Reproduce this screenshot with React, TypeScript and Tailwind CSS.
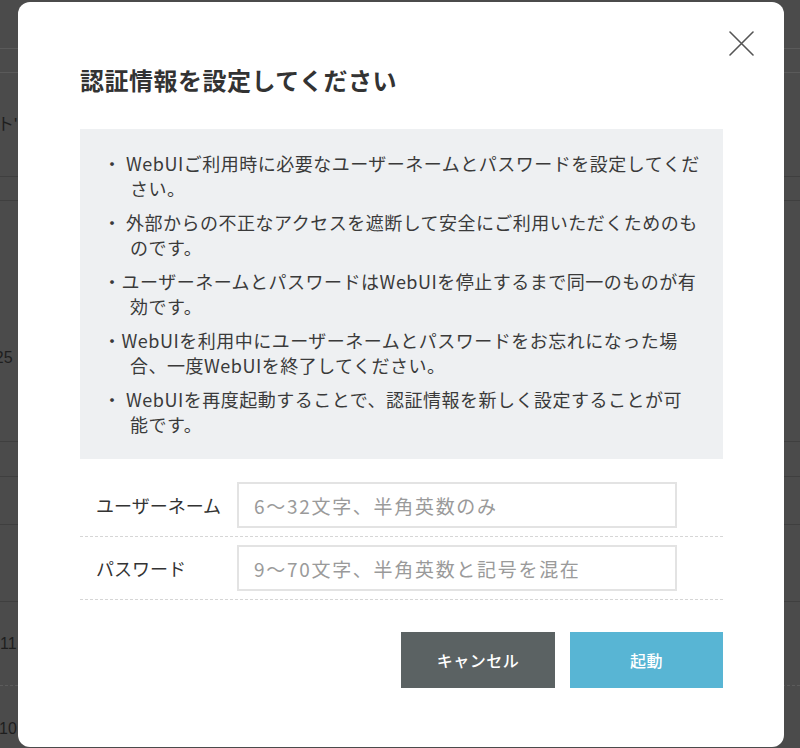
const bgRows = [
  { h: 'h-[49px]', line: 'border-[#5a5a5a]', text: '', cls: '' },
  { h: 'h-[24px]', line: 'border-[#5a5a5a]', text: '', cls: '' },
  { h: 'h-[104px] items-center', line: 'border-[#3f3f3f]', text: "ト'", cls: 'ml-[-3px] text-[17px]' },
  { h: 'h-[24px]', line: 'border-[#3f3f3f]', text: '', cls: '' },
  { h: 'h-[241px] items-start pt-[145px]', line: 'border-[#3f3f3f]', text: '2025', cls: 'ml-[-23px] text-[16px]' },
  { h: 'h-[35px]', line: 'border-[#3f3f3f]', text: '', cls: '' },
  { h: 'h-[48px]', line: 'border-[#3f3f3f]', text: '', cls: '' },
  { h: 'h-[77px]', line: 'border-[#3f3f3f]', text: '', cls: '' },
  { h: 'h-[84px] items-center border-dashed', line: 'border-[#5c5c5c]', text: '11', cls: 'ml-0 text-[16px]' },
  { h: 'h-[86px] items-center border-transparent', line: '', text: '10', cls: 'ml-[-1px] text-[16px]' },
]

// the last note breaks before 能 in the original, so the break is kept explicit
const notes = [
  '・ WebUIご利用時に必要なユーザーネームとパスワードを設定してください。',
  '・ 外部からの不正なアクセスを遮断して安全にご利用いただくためのものです。',
  '・ユーザーネームとパスワードはWebUIを停止するまで同一のものが有効です。',
  '・WebUIを利用中にユーザーネームとパスワードをお忘れになった場合、一度WebUIを終了してください。',
  '・ WebUIを再度起動することで、認証情報を新しく設定することが可\n能です。',
]

const fields = [
  { label: 'ユーザーネーム', placeholder: '6〜32文字、半角英数のみ', type: 'text' },
  { label: 'パスワード', placeholder: '9〜70文字、半角英数と記号を混在', type: 'password' },
]

export default function App() {
  return (
    <div className="relative h-[748px] w-full overflow-hidden bg-[#4b4b4b] font-['Noto_Sans_CJK_JP','Noto_Sans',sans-serif]">
      {/* dimmed page behind the dialog */}
      <div className="flex flex-col">
        {bgRows.map((r, i) => (
          <div key={i} className={'flex shrink-0 border-b ' + r.h + ' ' + r.line}>
            {r.text ? (
              <span className={'whitespace-nowrap leading-[24px] text-[#1e1e1e] font-["Liberation_Sans","Noto_Sans_CJK_JP",sans-serif] ' + r.cls}>{r.text}</span>
            ) : null}
          </div>
        ))}
      </div>

      <div className="absolute left-[18px] top-[2px] w-[766px] rounded-[12px] bg-white pl-[62px] pr-[61px] pt-[62px] pb-[59px] text-[#333]">
        <button className="absolute right-[30px] top-[29px] flex h-[25px] w-[25px] items-center justify-center text-[#555]">
          <svg width="25" height="25" viewBox="0 0 25 25" fill="none" stroke="currentColor" strokeWidth="1.6" strokeLinecap="round">
            <path d="M1 1L24 24M24 1L1 24" />
          </svg>
        </button>

        <h2 className="text-[24px] font-bold leading-[32px] tracking-[0.5px] text-[#333]">認証情報を設定してください</h2>

        <ul className="mt-[33px] space-y-[9px] bg-[#eef0f2] pl-[50px] pr-[18px] pt-[22px] pb-[22px]">
          {notes.map(n => (
            <li key={n} className="whitespace-pre-line indent-[-27px] text-[18px] leading-[25px] tracking-[0.5px] text-[#3a3a3a]">{n}</li>
          ))}
        </ul>

        <div className="mt-[15px]">
          {fields.map(f => (
            <div key={f.label} className="flex items-center border-b border-dashed border-[#d6d6d6] py-2">
              <label className="w-[157px] shrink-0 pl-[16px] text-[18px] text-[#333]">{f.label}</label>
              <input
                type={f.type}
                placeholder={f.placeholder}
                className="h-[46px] w-[440px] border-2 border-[#e3e3e3] bg-white px-[15px] text-[19px] tracking-[1.7px] text-[#333] outline-none placeholder:text-[#9a9a9a]"
              />
            </div>
          ))}
        </div>

        <div className="mt-[32px] flex justify-end gap-[15px]">
          <button className="h-[56px] w-[154px] bg-[#5b6263] text-[16px] font-medium tracking-[0.5px] text-white">キャンセル</button>
          <button className="h-[56px] w-[153px] bg-[#58b5d4] text-[16px] font-medium tracking-[0.5px] text-white">起動</button>
        </div>
      </div>
    </div>
  )
}
